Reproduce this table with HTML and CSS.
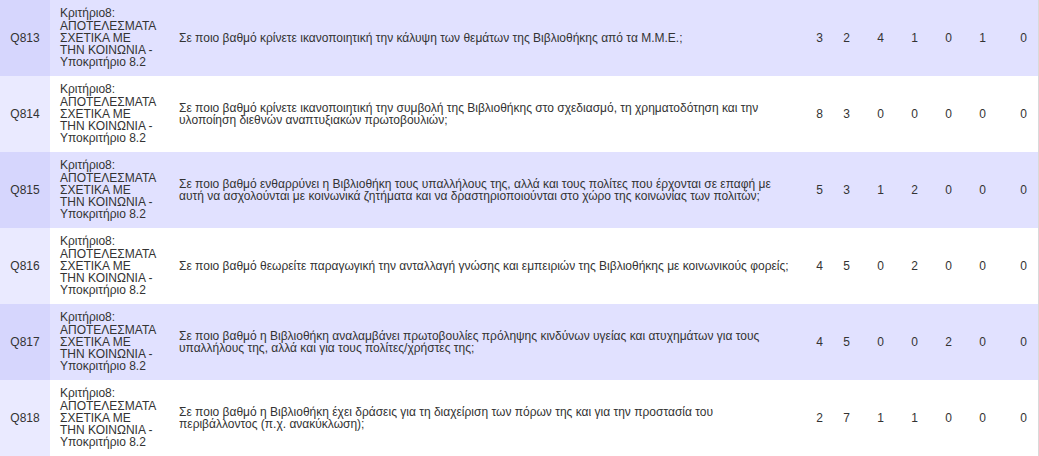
FILE: index.html
```html
<!DOCTYPE html>
<html lang="el">

<head>
    <meta charset="UTF-8">
    <title>Ερωτήσεις</title>
    <link rel="stylesheet" href="styles.css">
</head>

<body>
    <div class="results">
        <table class="questions">
            <colgroup>
                <col class="c-code">
                <col class="c-crit">
                <col class="c-text">
                <col class="c-n1">
                <col class="c-n2">
                <col class="c-n">
                <col class="c-n">
                <col class="c-n">
                <col class="c-n">
                <col class="c-last">
            </colgroup>
            <tbody>
                <tr>
                    <td class="code">Q813</td>
                    <td class="crit">Κριτήριο8: ΑΠΟΤΕΛΕΣΜΑΤΑ ΣΧΕΤΙΚΑ ΜΕ ΤΗΝ ΚΟΙΝΩΝΙΑ - Υποκριτήριο 8.2</td>
                    <td class="text">Σε ποιο βαθμό κρίνετε ικανοποιητική την κάλυψη των θεμάτων της Βιβλιοθήκης από τα Μ.Μ.Ε.;</td>
                    <td class="num">3</td>
                    <td class="num">2</td>
                    <td class="num">4</td>
                    <td class="num">1</td>
                    <td class="num">0</td>
                    <td class="num">1</td>
                    <td class="num">0</td>
                </tr>
                <tr>
                    <td class="code">Q814</td>
                    <td class="crit">Κριτήριο8: ΑΠΟΤΕΛΕΣΜΑΤΑ ΣΧΕΤΙΚΑ ΜΕ ΤΗΝ ΚΟΙΝΩΝΙΑ - Υποκριτήριο 8.2</td>
                    <td class="text">Σε ποιο βαθμό κρίνετε ικανοποιητική την συμβολή της Βιβλιοθήκης στο σχεδιασμό, τη χρηματοδότηση και την υλοποίηση διεθνών αναπτυξιακών πρωτοβουλιών;</td>
                    <td class="num">8</td>
                    <td class="num">3</td>
                    <td class="num">0</td>
                    <td class="num">0</td>
                    <td class="num">0</td>
                    <td class="num">0</td>
                    <td class="num">0</td>
                </tr>
                <tr>
                    <td class="code">Q815</td>
                    <td class="crit">Κριτήριο8: ΑΠΟΤΕΛΕΣΜΑΤΑ ΣΧΕΤΙΚΑ ΜΕ ΤΗΝ ΚΟΙΝΩΝΙΑ - Υποκριτήριο 8.2</td>
                    <td class="text">Σε ποιο βαθμό ενθαρρύνει η Βιβλιοθήκη τους υπαλλήλους της, αλλά και τους πολίτες που έρχονται σε επαφή με αυτή να ασχολούνται με κοινωνικά ζητήματα και να δραστηριοποιούνται στο χώρο της κοινωνίας των πολιτών;</td>
                    <td class="num">5</td>
                    <td class="num">3</td>
                    <td class="num">1</td>
                    <td class="num">2</td>
                    <td class="num">0</td>
                    <td class="num">0</td>
                    <td class="num">0</td>
                </tr>
                <tr>
                    <td class="code">Q816</td>
                    <td class="crit">Κριτήριο8: ΑΠΟΤΕΛΕΣΜΑΤΑ ΣΧΕΤΙΚΑ ΜΕ ΤΗΝ ΚΟΙΝΩΝΙΑ - Υποκριτήριο 8.2</td>
                    <td class="text">Σε ποιο βαθμό θεωρείτε παραγωγική την ανταλλαγή γνώσης και εμπειριών της Βιβλιοθήκης με κοινωνικούς φορείς;</td>
                    <td class="num">4</td>
                    <td class="num">5</td>
                    <td class="num">0</td>
                    <td class="num">2</td>
                    <td class="num">0</td>
                    <td class="num">0</td>
                    <td class="num">0</td>
                </tr>
                <tr>
                    <td class="code">Q817</td>
                    <td class="crit">Κριτήριο8: ΑΠΟΤΕΛΕΣΜΑΤΑ ΣΧΕΤΙΚΑ ΜΕ ΤΗΝ ΚΟΙΝΩΝΙΑ - Υποκριτήριο 8.2</td>
                    <td class="text">Σε ποιο βαθμό η Βιβλιοθήκη αναλαμβάνει πρωτοβουλίες πρόληψης κινδύνων υγείας και ατυχημάτων για τους υπαλλήλους της, αλλά και για τους πολίτες/χρήστες της;</td>
                    <td class="num">4</td>
                    <td class="num">5</td>
                    <td class="num">0</td>
                    <td class="num">0</td>
                    <td class="num">2</td>
                    <td class="num">0</td>
                    <td class="num">0</td>
                </tr>
                <tr>
                    <td class="code">Q818</td>
                    <td class="crit">Κριτήριο8: ΑΠΟΤΕΛΕΣΜΑΤΑ ΣΧΕΤΙΚΑ ΜΕ ΤΗΝ ΚΟΙΝΩΝΙΑ - Υποκριτήριο 8.2</td>
                    <td class="text">Σε ποιο βαθμό η Βιβλιοθήκη έχει δράσεις για τη διαχείριση των πόρων της και για την προστασία του περιβάλλοντος (π.χ. ανακύκλωση);</td>
                    <td class="num">2</td>
                    <td class="num">7</td>
                    <td class="num">1</td>
                    <td class="num">1</td>
                    <td class="num">0</td>
                    <td class="num">0</td>
                    <td class="num">0</td>
                </tr>
            </tbody>
        </table>
    </div>
</body>

</html>
```
FILE: styles.css
```css
body,
table,
td {
    margin: 0;
    padding: 0;
}

body {
    background: #fff;
    color: #333;
    font: 12px/12px "Liberation Sans", Arial, sans-serif;
}

.results {
    width: 1038px;
    border-right: 1px solid #d9d9d9;
    overflow: hidden;
}

.questions {
    width: 1038px;
    table-layout: fixed;
    border-collapse: collapse;
}

.questions col.c-code { width: 50px; }
.questions col.c-crit { width: 119px; }
.questions col.c-text { width: 633px; }
.questions col.c-n1 { width: 31px; }
.questions col.c-n2 { width: 27px; }
.questions col.c-n { width: 34px; }
.questions col.c-last { width: 42px; }

.questions tr {
    height: 76px;
    background: #fff;
}

.questions tr:nth-child(odd) {
    background: #e1e1ff;
}

.questions td {
    vertical-align: middle;
    padding: 0 10px;
}

.questions td.code {
    padding: 0;
    text-align: center;
    background: #eaeaff;
}

.questions tr:nth-child(odd) td.code {
    background: #d6d6fd;
}

.questions td.crit {
    padding-right: 11px;
    line-height: 12.3px;
}

.questions td.num {
    text-align: right;
    padding: 0 10px 0 0;
}

.questions td.num:last-child {
    padding-right: 11px;
}
```
